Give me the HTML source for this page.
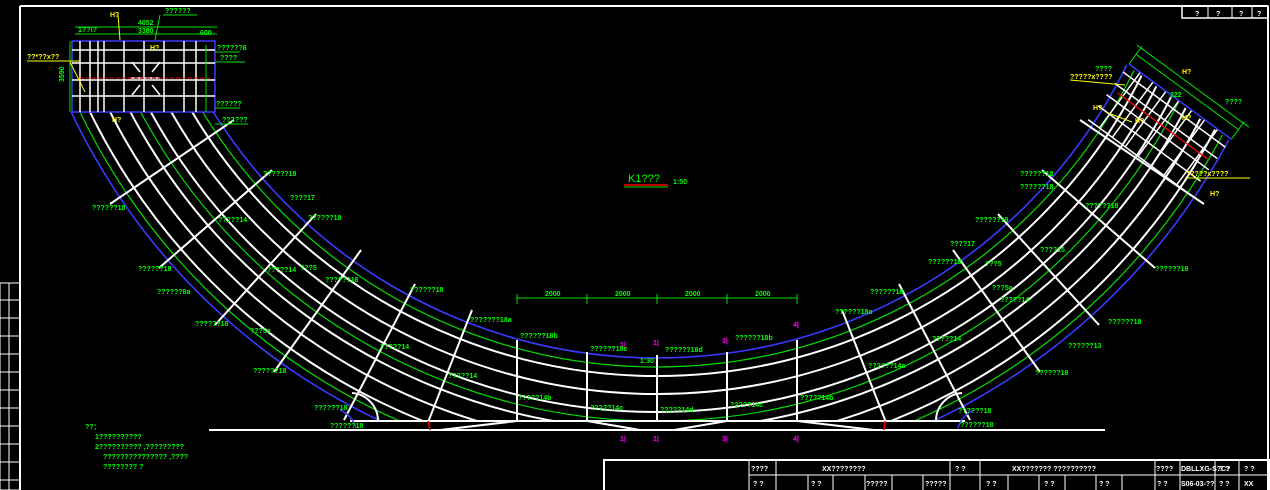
<!DOCTYPE html>
<html><head><meta charset="utf-8"><style>
html,body{margin:0;padding:0;background:#000;width:1270px;height:490px;overflow:hidden}
svg{display:block}
text{font-family:"Liberation Sans Narrow","Liberation Sans",sans-serif;font-size:7px;font-weight:bold}
</style></head><body>
<svg width="1270" height="490" viewBox="0 0 1270 490" xmlns="http://www.w3.org/2000/svg">
<defs>
<clipPath id="band"><polygon points="0,112 240,112 657,200 1040,1 1270,170 1270,421 0,421"/></clipPath>
</defs>
<g stroke="#fff" stroke-width="2" fill="none">
<line x1="20" y1="6" x2="1268" y2="6"/>
<line x1="20" y1="6" x2="20" y2="490"/>
<line x1="1268" y1="6" x2="1268" y2="490"/>
<rect x="1182" y="6" width="86" height="12" stroke-width="1.5"/>
</g>
<g stroke="#fff" stroke-width="1">
<line x1="1208" y1="6" x2="1208" y2="18"/><line x1="1232" y1="6" x2="1232" y2="18"/><line x1="1252" y1="6" x2="1252" y2="18"/>
</g>
<text x="1195" y="16" fill="#fff">?</text><text x="1216" y="16" fill="#fff">?</text><text x="1239" y="16" fill="#fff">?</text><text x="1257" y="16" fill="#fff">?</text>
<g stroke="#fff" stroke-width="1" fill="none">
<rect x="0" y="283" width="20" height="207"/>
<line x1="9" y1="283" x2="9" y2="490"/>
<line x1="0" y1="300" x2="20" y2="300"/><line x1="0" y1="318" x2="20" y2="318"/><line x1="0" y1="336" x2="20" y2="336"/><line x1="0" y1="354" x2="20" y2="354"/><line x1="0" y1="372" x2="20" y2="372"/><line x1="0" y1="390" x2="20" y2="390"/><line x1="0" y1="408" x2="20" y2="408"/><line x1="0" y1="426" x2="20" y2="426"/><line x1="0" y1="444" x2="20" y2="444"/><line x1="0" y1="462" x2="20" y2="462"/><line x1="0" y1="480" x2="20" y2="480"/>
</g>

<g clip-path="url(#band)" fill="none">
<g stroke="#fff" stroke-width="2">
<circle cx="657" cy="-165" r="541"/>
<circle cx="657" cy="-165" r="559"/>
<circle cx="657" cy="-165" r="577"/>
<circle cx="657" cy="-165" r="595"/>
<circle cx="657" cy="-165" r="613"/>
<circle cx="657" cy="-165" r="631"/>
</g>
<g stroke="#00e000" stroke-width="1.2">
<circle cx="657" cy="-165" r="532"/>
<circle cx="657" cy="-165" r="586"/>
<circle cx="657" cy="-165" r="640"/>
</g>
<g stroke="#3a3aff" stroke-width="1.6">
<circle cx="657" cy="-165" r="523"/>
<circle cx="657" cy="-165" r="648"/>
</g>
<g stroke="#fff" stroke-width="2">
<line x1="234" y1="120" x2="110" y2="204"/>
<line x1="272" y1="170" x2="159" y2="268"/>
<line x1="316" y1="214" x2="215" y2="325"/>
<line x1="361" y1="250" x2="274" y2="372"/>
<line x1="415" y1="284" x2="344" y2="420"/>
<line x1="472" y1="310" x2="425" y2="430"/>
<line x1="1080" y1="120" x2="1204" y2="204"/>
<line x1="1042" y1="170" x2="1155" y2="268"/>
<line x1="998" y1="214" x2="1099" y2="325"/>
<line x1="953" y1="250" x2="1040" y2="372"/>
<line x1="899" y1="284" x2="970" y2="420"/>
<line x1="842" y1="310" x2="889" y2="430"/>
<line x1="517" y1="340" x2="517" y2="430"/>
<line x1="587" y1="352" x2="587" y2="430"/>
<line x1="657" y1="355" x2="657" y2="430"/>
<line x1="727" y1="352" x2="727" y2="430"/>
<line x1="797" y1="340" x2="797" y2="430"/>
</g>
</g>
<g stroke="#fff" stroke-width="2" fill="none">
<line x1="350" y1="421" x2="965" y2="421"/>
<line x1="209" y1="430" x2="1105" y2="430"/>
<path d="M378,421 A28,28 0 0 0 352,393"/>
<path d="M936,421 A28,28 0 0 1 962,393"/>
<path d="M440,430 L517,421 M587,421 L640,430 M674,430 L727,421 M797,421 L874,430"/>
</g>
<g stroke="#3a3aff" stroke-width="1.5" fill="none">
<path d="M340,410 Q352,415 356,428"/><path d="M974,410 Q962,415 958,428"/>
</g>
<g stroke="#f00" stroke-width="1.5">
<line x1="428" y1="421" x2="430" y2="430"/><line x1="885" y1="421" x2="884" y2="430"/>
</g>

<!-- left box -->
<g fill="none">
<rect x="72" y="41" width="143" height="71" stroke="#3a3aff" stroke-width="1.5"/>
<g stroke="#fff" stroke-width="1.5">
<line x1="72" y1="50" x2="215" y2="50"/><line x1="72" y1="63" x2="215" y2="63"/><line x1="72" y1="80" x2="215" y2="80"/><line x1="72" y1="96" x2="215" y2="96"/>
<line x1="80" y1="41" x2="80" y2="112"/><line x1="90" y1="41" x2="90" y2="112"/><line x1="98" y1="41" x2="98" y2="112"/><line x1="104" y1="41" x2="104" y2="112"/><line x1="124" y1="41" x2="124" y2="112"/><line x1="144" y1="41" x2="144" y2="112"/><line x1="164" y1="41" x2="164" y2="112"/><line x1="184" y1="41" x2="184" y2="112"/><line x1="196" y1="41" x2="196" y2="112"/>
<path d="M132,62 L140,72 M160,62 L152,72 M132,95 L140,85 M160,95 L152,85 M130,78 L160,78"/>
</g>
<line x1="80" y1="78" x2="212" y2="78" stroke="#f00" stroke-width="1" stroke-dasharray="4,2"/>
<g stroke="#00e000" stroke-width="1">
<line x1="75" y1="27" x2="217" y2="27"/><line x1="75" y1="34" x2="200" y2="34"/><line x1="200" y1="34" x2="217" y2="34"/>
<line x1="70" y1="41" x2="70" y2="112"/><line x1="206" y1="45" x2="206" y2="112"/>
<line x1="163" y1="15" x2="197" y2="15"/><line x1="160" y1="15" x2="155" y2="40"/>
<line x1="215" y1="52" x2="240" y2="52"/><line x1="215" y1="62" x2="245" y2="62"/><line x1="215" y1="108" x2="240" y2="108"/>
<line x1="215" y1="124" x2="248" y2="124"/>
</g>
<g stroke="#ff0" stroke-width="1"><line x1="27" y1="61" x2="80" y2="61"/><line x1="70" y1="62" x2="85" y2="92"/><line x1="118" y1="15" x2="120" y2="40"/></g>
</g>
<g fill="#00ff00">
<text x="165" y="13">??????</text><text x="138" y="25">4052</text><text x="138" y="33">3380</text><text x="200" y="35">600</text>
<text x="78" y="32">1??!?</text><text x="217" y="50">??????8</text><text x="220" y="60">????</text><text x="216" y="106">??????</text><text x="222" y="122">??????</text>
<text x="64" y="82" transform="rotate(-90 64 82)">3590</text>
</g>
<g fill="#ff0"><text x="27" y="59">??*??x??</text><text x="110" y="17">H?</text><text x="150" y="50">H?</text><text x="112" y="122">H?</text></g>

<!-- right box -->
<g transform="translate(1129,64) rotate(36.3)" fill="none">
<g stroke="#fff" stroke-width="1.5">
<line x1="0" y1="10" x2="127" y2="10"/><line x1="0" y1="24" x2="127" y2="24"/><line x1="0" y1="38" x2="127" y2="38"/><line x1="0" y1="52" x2="127" y2="52"/><line x1="0" y1="69" x2="127" y2="69"/>
<line x1="14" y1="0" x2="14" y2="69"/><line x1="30" y1="0" x2="30" y2="69"/><line x1="46" y1="0" x2="46" y2="69"/><line x1="62" y1="0" x2="62" y2="69"/><line x1="78" y1="0" x2="78" y2="69"/><line x1="94" y1="0" x2="94" y2="69"/><line x1="110" y1="0" x2="110" y2="69"/>
</g>
<line x1="0" y1="0" x2="127" y2="0" stroke="#3a3aff" stroke-width="1.5"/>
<line x1="8" y1="30" x2="120" y2="30" stroke="#f00" stroke-width="1.2"/>
<g stroke="#00e000" stroke-width="1"><line x1="0" y1="-12" x2="127" y2="-12"/><line x1="-5" y1="-20" x2="134" y2="-20"/><line x1="0" y1="-22" x2="0" y2="0"/><line x1="127" y1="-22" x2="127" y2="0"/></g>
</g>
<g stroke="#ff0" stroke-width="1"><line x1="1070" y1="80" x2="1125" y2="85"/><line x1="1185" y1="178" x2="1250" y2="178"/><line x1="1108" y1="113" x2="1132" y2="122"/></g>
<g fill="#ff0"><text x="1070" y="79">?????x????</text><text x="1186" y="176">?????x????</text><text x="1182" y="74">H?</text><text x="1093" y="110">H?</text><text x="1210" y="196">H?</text><text x="1135" y="123">H?</text><text x="1182" y="120">H?</text></g>
<g fill="#00ff00"><text x="1095" y="71">????</text><text x="1225" y="104">????</text><text x="1170" y="97">322</text></g>

<g stroke="#00e000" stroke-width="1">
<line x1="517" y1="298" x2="797" y2="298"/>
<line x1="517" y1="294" x2="517" y2="304"/><line x1="587" y1="294" x2="587" y2="304"/><line x1="657" y1="294" x2="657" y2="304"/><line x1="727" y1="294" x2="727" y2="304"/><line x1="797" y1="294" x2="797" y2="304"/>
</g>
<g fill="#00ff00"><text x="545" y="296">2000</text><text x="615" y="296">2000</text><text x="685" y="296">2000</text><text x="755" y="296">2000</text></g>
<g fill="#f0f"><text x="620" y="347">1|</text><text x="653" y="345">1|</text><text x="722" y="343">3|</text><text x="793" y="327">4|</text>
<text x="620" y="441">1|</text><text x="653" y="441">1|</text><text x="722" y="441">3|</text><text x="793" y="441">4|</text></g>

<text x="628" y="182" fill="#00ff00" style="font-size:11px;font-weight:normal">K1???</text>
<line x1="624" y1="185" x2="668" y2="185" stroke="#f00" stroke-width="1.5"/>
<line x1="624" y1="187" x2="668" y2="187" stroke="#00e000" stroke-width="1"/>
<text x="673" y="184" fill="#00ff00">1:50</text>

<g fill="#00ff00">
<text x="263" y="176">??????18</text><text x="290" y="200">????17</text><text x="308" y="220">??????18</text><text x="92" y="210">??????18</text>
<text x="138" y="271">??????18</text><text x="157" y="294">??????8a</text><text x="195" y="326">??????18</text><text x="218" y="222">?????14</text>
<text x="267" y="272">?????14</text><text x="300" y="270">???5</text><text x="325" y="282">??????18</text><text x="250" y="333">???5a</text>
<text x="253" y="373">??????18</text><text x="314" y="410">??????18</text><text x="330" y="428">??????18</text><text x="380" y="349">?????14</text>
<text x="410" y="292">??????18</text><text x="470" y="322">???????18a</text><text x="520" y="338">??????18b</text><text x="590" y="351">??????18c</text>
<text x="665" y="352">??????18d</text><text x="735" y="340">??????18b</text><text x="835" y="314">??????18a</text><text x="870" y="294">??????18</text>
<text x="1020" y="176">??????18</text><text x="1020" y="189">??????18</text><text x="975" y="222">??????18</text><text x="950" y="246">????17</text>
<text x="928" y="264">??????18</text><text x="1155" y="271">??????18</text><text x="1108" y="324">??????18</text><text x="1068" y="348">??????13</text>
<text x="1035" y="375">??????18</text><text x="958" y="413">??????18</text><text x="960" y="427">??????18</text><text x="1040" y="252">????15</text>
<text x="1085" y="208">??????18</text><text x="1000" y="302">?????14</text><text x="868" y="368">??????14a</text><text x="448" y="378">?????14</text>
<text x="518" y="400">?????14b</text><text x="590" y="410">?????14c</text><text x="660" y="412">?????14d</text><text x="730" y="407">?????14c</text>
<text x="800" y="400">?????14b</text><text x="932" y="341">?????14</text><text x="985" y="266">???5</text><text x="992" y="290">???5a</text>
<text x="640" y="363">1:30</text>
</g>

<g fill="#00ff00">
<text x="85" y="429">??：</text>
<text x="95" y="439">1??????????</text>
<text x="95" y="449">2?????????? ,?????????</text>
<text x="103" y="459">??????????????? ,????</text>
<text x="103" y="469">???????? ?</text>
</g>

<g stroke="#fff" fill="none" stroke-width="2">
<rect x="604" y="460" width="666" height="32"/>
</g>
<g stroke="#fff" stroke-width="1">
<line x1="749" y1="475" x2="1270" y2="475"/>
<line x1="749" y1="460" x2="749" y2="490"/><line x1="776" y1="460" x2="776" y2="490"/><line x1="950" y1="460" x2="950" y2="490"/><line x1="980" y1="460" x2="980" y2="490"/><line x1="1155" y1="460" x2="1155" y2="490"/><line x1="1180" y1="460" x2="1180" y2="490"/><line x1="1215" y1="460" x2="1215" y2="490"/><line x1="1239" y1="460" x2="1239" y2="490"/>
<line x1="808" y1="475" x2="808" y2="490"/><line x1="833" y1="475" x2="833" y2="490"/><line x1="865" y1="475" x2="865" y2="490"/><line x1="892" y1="475" x2="892" y2="490"/><line x1="923" y1="475" x2="923" y2="490"/><line x1="1008" y1="475" x2="1008" y2="490"/><line x1="1039" y1="475" x2="1039" y2="490"/><line x1="1065" y1="475" x2="1065" y2="490"/><line x1="1096" y1="475" x2="1096" y2="490"/><line x1="1122" y1="475" x2="1122" y2="490"/>
</g>
<g fill="#fff">
<text x="751" y="471">????</text><text x="822" y="471">XX????????</text><text x="955" y="471">? ?</text><text x="1012" y="471">XX??????? ??????????</text>
<text x="1156" y="471">????</text><text x="1181" y="471">DBLLXG-S?C?</text><text x="1219" y="471">? ?</text><text x="1244" y="471">? ?</text>
<text x="753" y="486">? ?</text><text x="811" y="486">? ?</text><text x="866" y="486">?????</text><text x="925" y="486">?????</text>
<text x="986" y="486">? ?</text><text x="1044" y="486">? ?</text><text x="1099" y="486">? ?</text><text x="1157" y="486">? ?</text>
<text x="1181" y="486">S06-03-??</text><text x="1219" y="486">? ?</text><text x="1244" y="486">XX</text>
</g>
</svg>
</body></html>
